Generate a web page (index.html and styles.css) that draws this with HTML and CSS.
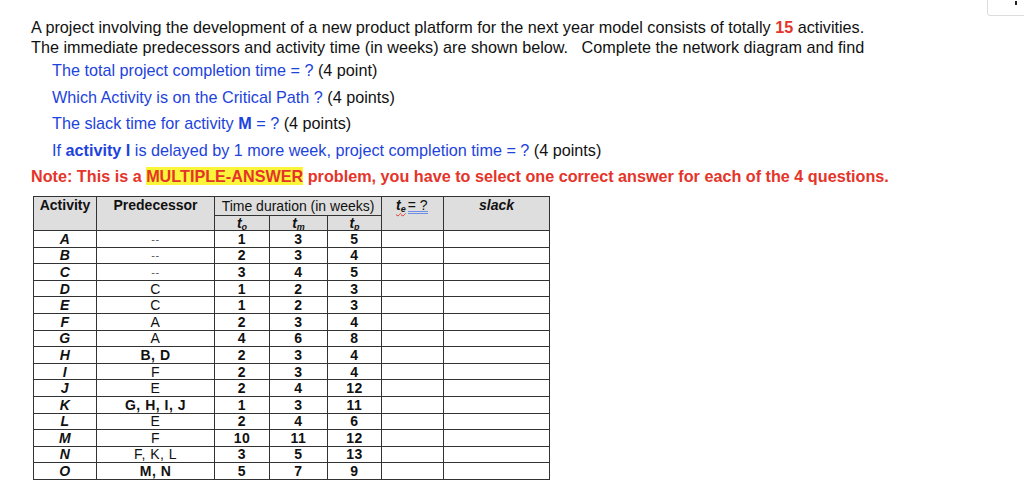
FILE: index.html
```html
<!DOCTYPE html>
<html>
<head>
<meta charset="utf-8">
<link rel="stylesheet" href="styles.css">
</head>
<body>
<div class="corner"><span class="tick"></span></div>
<div class="page">
  <p class="intro">A project involving the development of a new product platform for the next year model consists of totally <b class="red">15</b> activities.<br>The immediate predecessors and activity time (in weeks) are shown below. &nbsp; Complete the network diagram and find</p>
  <p class="q"><span class="blue">The total project completion time = ?</span> (4 point)</p>
  <p class="q"><span class="blue">Which Activity is on the Critical Path ?</span> (4 points)</p>
  <p class="q"><span class="blue">The slack time for activity <b>M</b> = ?</span> (4 points)</p>
  <p class="q"><span class="blue">If <b>activity I</b> is delayed by 1 more week, project completion time = ?</span> (4 points)</p>
  <p class="note">Note: This is a <span class="hl">MULTIPLE-ANSWER</span> problem, you have to select one correct answer for each of the 4 questions.</p>

  <table class="grid">
    <colgroup>
      <col class="c-act"><col class="c-pre"><col class="c-n"><col class="c-n2"><col class="c-n3"><col class="c-te"><col class="c-sl">
    </colgroup>
    <thead>
      <tr class="h1">
        <th rowspan="2" class="hb">Activity</th>
        <th rowspan="2" class="hb">Predecessor</th>
        <th colspan="3" class="td-title">Time duration (in weeks)</th>
        <th rowspan="2" class="te-h"><span class="squig"><i class="tt">t</i><sub>e</sub></span><span class="eq">= ?</span></th>
        <th rowspan="2" class="hb"><i>slack</i></th>
      </tr>
      <tr class="h2">
        <th><i class="tt">t</i><sub>o</sub></th>
        <th><i class="tt">t</i><sub>m</sub></th>
        <th><span class="squig"><i class="tt">t</i><sub>p</sub></span></th>
      </tr>
    </thead>
    <tbody>
      <tr><td class="act">A</td><td class="dash">--</td><td>1</td><td>3</td><td>5</td><td></td><td></td></tr>
      <tr><td class="act">B</td><td class="dash">--</td><td>2</td><td>3</td><td>4</td><td></td><td></td></tr>
      <tr><td class="act">C</td><td class="dash">--</td><td>3</td><td>4</td><td>5</td><td></td><td></td></tr>
      <tr><td class="act">D</td><td class="pre">C</td><td>1</td><td>2</td><td>3</td><td></td><td></td></tr>
      <tr><td class="act">E</td><td class="pre">C</td><td>1</td><td>2</td><td>3</td><td></td><td></td></tr>
      <tr><td class="act">F</td><td class="pre">A</td><td>2</td><td>3</td><td>4</td><td></td><td></td></tr>
      <tr><td class="act">G</td><td class="pre">A</td><td>4</td><td>6</td><td>8</td><td></td><td></td></tr>
      <tr><td class="act">H</td><td class="pre pb">B, D</td><td>2</td><td>3</td><td>4</td><td></td><td></td></tr>
      <tr><td class="act">I</td><td class="pre">F</td><td>2</td><td>3</td><td>4</td><td></td><td></td></tr>
      <tr><td class="act">J</td><td class="pre">E</td><td>2</td><td>4</td><td>12</td><td></td><td></td></tr>
      <tr><td class="act">K</td><td class="pre pb">G, H, I, J</td><td>1</td><td>3</td><td>11</td><td></td><td></td></tr>
      <tr><td class="act">L</td><td class="pre">E</td><td>2</td><td>4</td><td>6</td><td></td><td></td></tr>
      <tr><td class="act">M</td><td class="pre">F</td><td>10</td><td>11</td><td>12</td><td></td><td></td></tr>
      <tr><td class="act">N</td><td class="pre">F, K, L</td><td>3</td><td>5</td><td>13</td><td></td><td></td></tr>
      <tr><td class="act">O</td><td class="pre pb">M, N</td><td>5</td><td>7</td><td>9</td><td></td><td></td></tr>
    </tbody>
  </table>
</div>
</body>
</html>
```

FILE: styles.css
```css
html, body {
  margin: 0;
  padding: 0;
  background: #ffffff;
}

body {
  font-family: "Liberation Sans", Arial, sans-serif;
  color: #111;
  position: relative;
  height: 485px;
  overflow: hidden;
}

.corner {
  position: absolute;
  top: -1px;
  right: -1px;
  width: 36px;
  height: 15px;
  border: 1px solid #dcdcdc;
  border-radius: 0 0 0 3px;
  background: #fff;
}

.corner .tick {
  position: absolute;
  left: 27px;
  top: 1px;
  width: 2px;
  height: 4px;
  background: #222;
}

.page {
  padding: 18px 0 0 31px;
}

.intro {
  margin: 0;
  font-size: 16.2px;
  line-height: 19.5px;
}

.q {
  margin: 0 0 0 21px;
  font-size: 16.2px;
  line-height: 26.6px;
}

.blue {
  color: #1d43dc;
}

.red {
  color: #e5342a;
}

.note {
  margin: 0;
  font-size: 16.2px;
  line-height: 26.6px;
  font-weight: bold;
  color: #e5342a;
}

.hl {
  background: #fbf53a;
}

.grid {
  margin: 6px 0 0 2px;
  border-collapse: collapse;
  table-layout: fixed;
  width: 516px;
  font-size: 14px;
  color: #111;
}

.c-act { width: 63px; }
.c-pre { width: 118px; }
.c-n { width: 55px; }
.c-n2 { width: 58px; }
.c-n3 { width: 54px; }
.c-te { width: 62px; }
.c-sl { width: 106px; }

.grid th,
.grid td {
  border: 1px solid #333;
  padding: 0;
  text-align: center;
  line-height: 14px;
  overflow: hidden;
  white-space: nowrap;
}

.grid th {
  background: #dedede;
  font-weight: normal;
  vertical-align: top;
}

.grid th.hb {
  font-weight: bold;
}

.grid .h1 th {
  height: 17px;
  padding-top: 1px;
}

.grid .h2 th {
  height: 13px;
}

.grid th.td-title {
  font-size: 14px;
  line-height: 16px;
}

.tt {
  font-weight: bold;
  font-style: italic;
}

.grid sub {
  font-size: 9px;
  font-style: italic;
  font-weight: bold;
  line-height: 0;
  vertical-align: -2px;
}

.squig {
  text-decoration: underline wavy #e0302a;
  text-decoration-thickness: 1px;
  text-underline-offset: 2px;
}

.grid th.te-h {
  text-align: left;
}

.te-h .squig {
  margin-left: 14px;
}

.eq {
  margin-left: 2px;
  border-bottom: 3px double #6d8fe6;
  line-height: 12px;
  display: inline-block;
}

.grid tbody td {
  height: 15.6px;
  font-weight: bold;
  vertical-align: middle;
  letter-spacing: 0.5px;
}

.grid td.act {
  font-style: italic;
}

.grid td.dash {
  font-weight: normal;
  color: #555;
  font-size: 11px;
}

.grid td.pre {
  font-weight: normal;
}

.grid td.pre.pb {
  font-weight: bold;
}
```
